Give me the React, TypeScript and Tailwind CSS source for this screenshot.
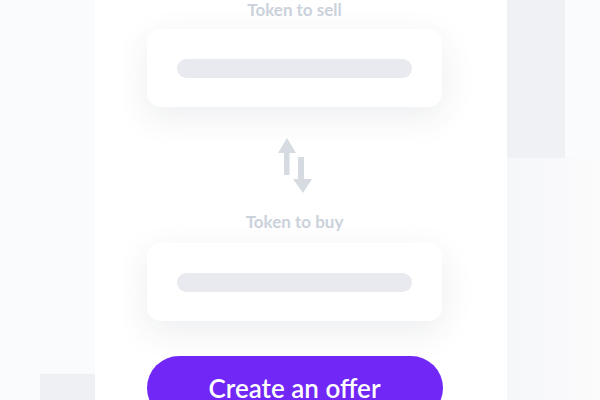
const labelCls = "text-[17px] leading-[20px] font-bold text-[#cbd2db]";

function TokenField() {
  return (
    <div className="w-[295px] h-[78px] rounded-[14px] bg-white px-[30px] pt-[30px] shadow-[0_10px_34px_rgba(40,50,80,0.09)]">
      <div className="h-[19px] rounded-full bg-[#e9eaef]" />
    </div>
  );
}

function SwapIcon() {
  return (
    <svg width="34" height="55" viewBox="0 0 34 55" fill="#d5dbe0">
      <polygon points="0,15 9,0 18,15" />
      <rect x="6" y="15" width="5.5" height="22" />
      <rect x="20" y="19" width="6" height="22" />
      <polygon points="15,41 25,55 34,41" />
    </svg>
  );
}

export default function App() {
  return (
    <div
      className="h-[400px] w-[600px] overflow-hidden flex bg-[#fafbfc]"
      style={{ fontFamily: "Lato, 'Noto Sans', sans-serif" }}
    >
      {/* left margin with the grey corner block */}
      <div className="w-[95px] flex flex-col justify-end">
        <div className="ml-[40px] h-[26px] bg-[#eff0f3]" />
      </div>

      {/* centre panel */}
      <div className="w-[412px] bg-white flex flex-col items-center pr-[13px]">
        <p className={labelCls}>Token to sell</p>
        <div className="mt-[9px]">
          <TokenField />
        </div>
        <div className="mt-[31px]">
          <SwapIcon />
        </div>
        <p className={`${labelCls} mt-[19px]`}>Token to buy</p>
        <div className="mt-[11px]">
          <TokenField />
        </div>
        <button className="mt-[35px] w-[296px] h-[64px] shrink-0 rounded-full bg-[#7127f6] text-white text-[26px] font-semibold flex items-center justify-center">
          Create an offer
        </button>
      </div>

      {/* right column */}
      <div className="flex-1 flex flex-col">
        <div className="w-[58px] h-[158px] bg-[#eff1f4]" />
        <div className="flex-1 bg-gradient-to-r from-[#f6f7f9] to-[#fbfbfc]" />
      </div>
    </div>
  );
}
